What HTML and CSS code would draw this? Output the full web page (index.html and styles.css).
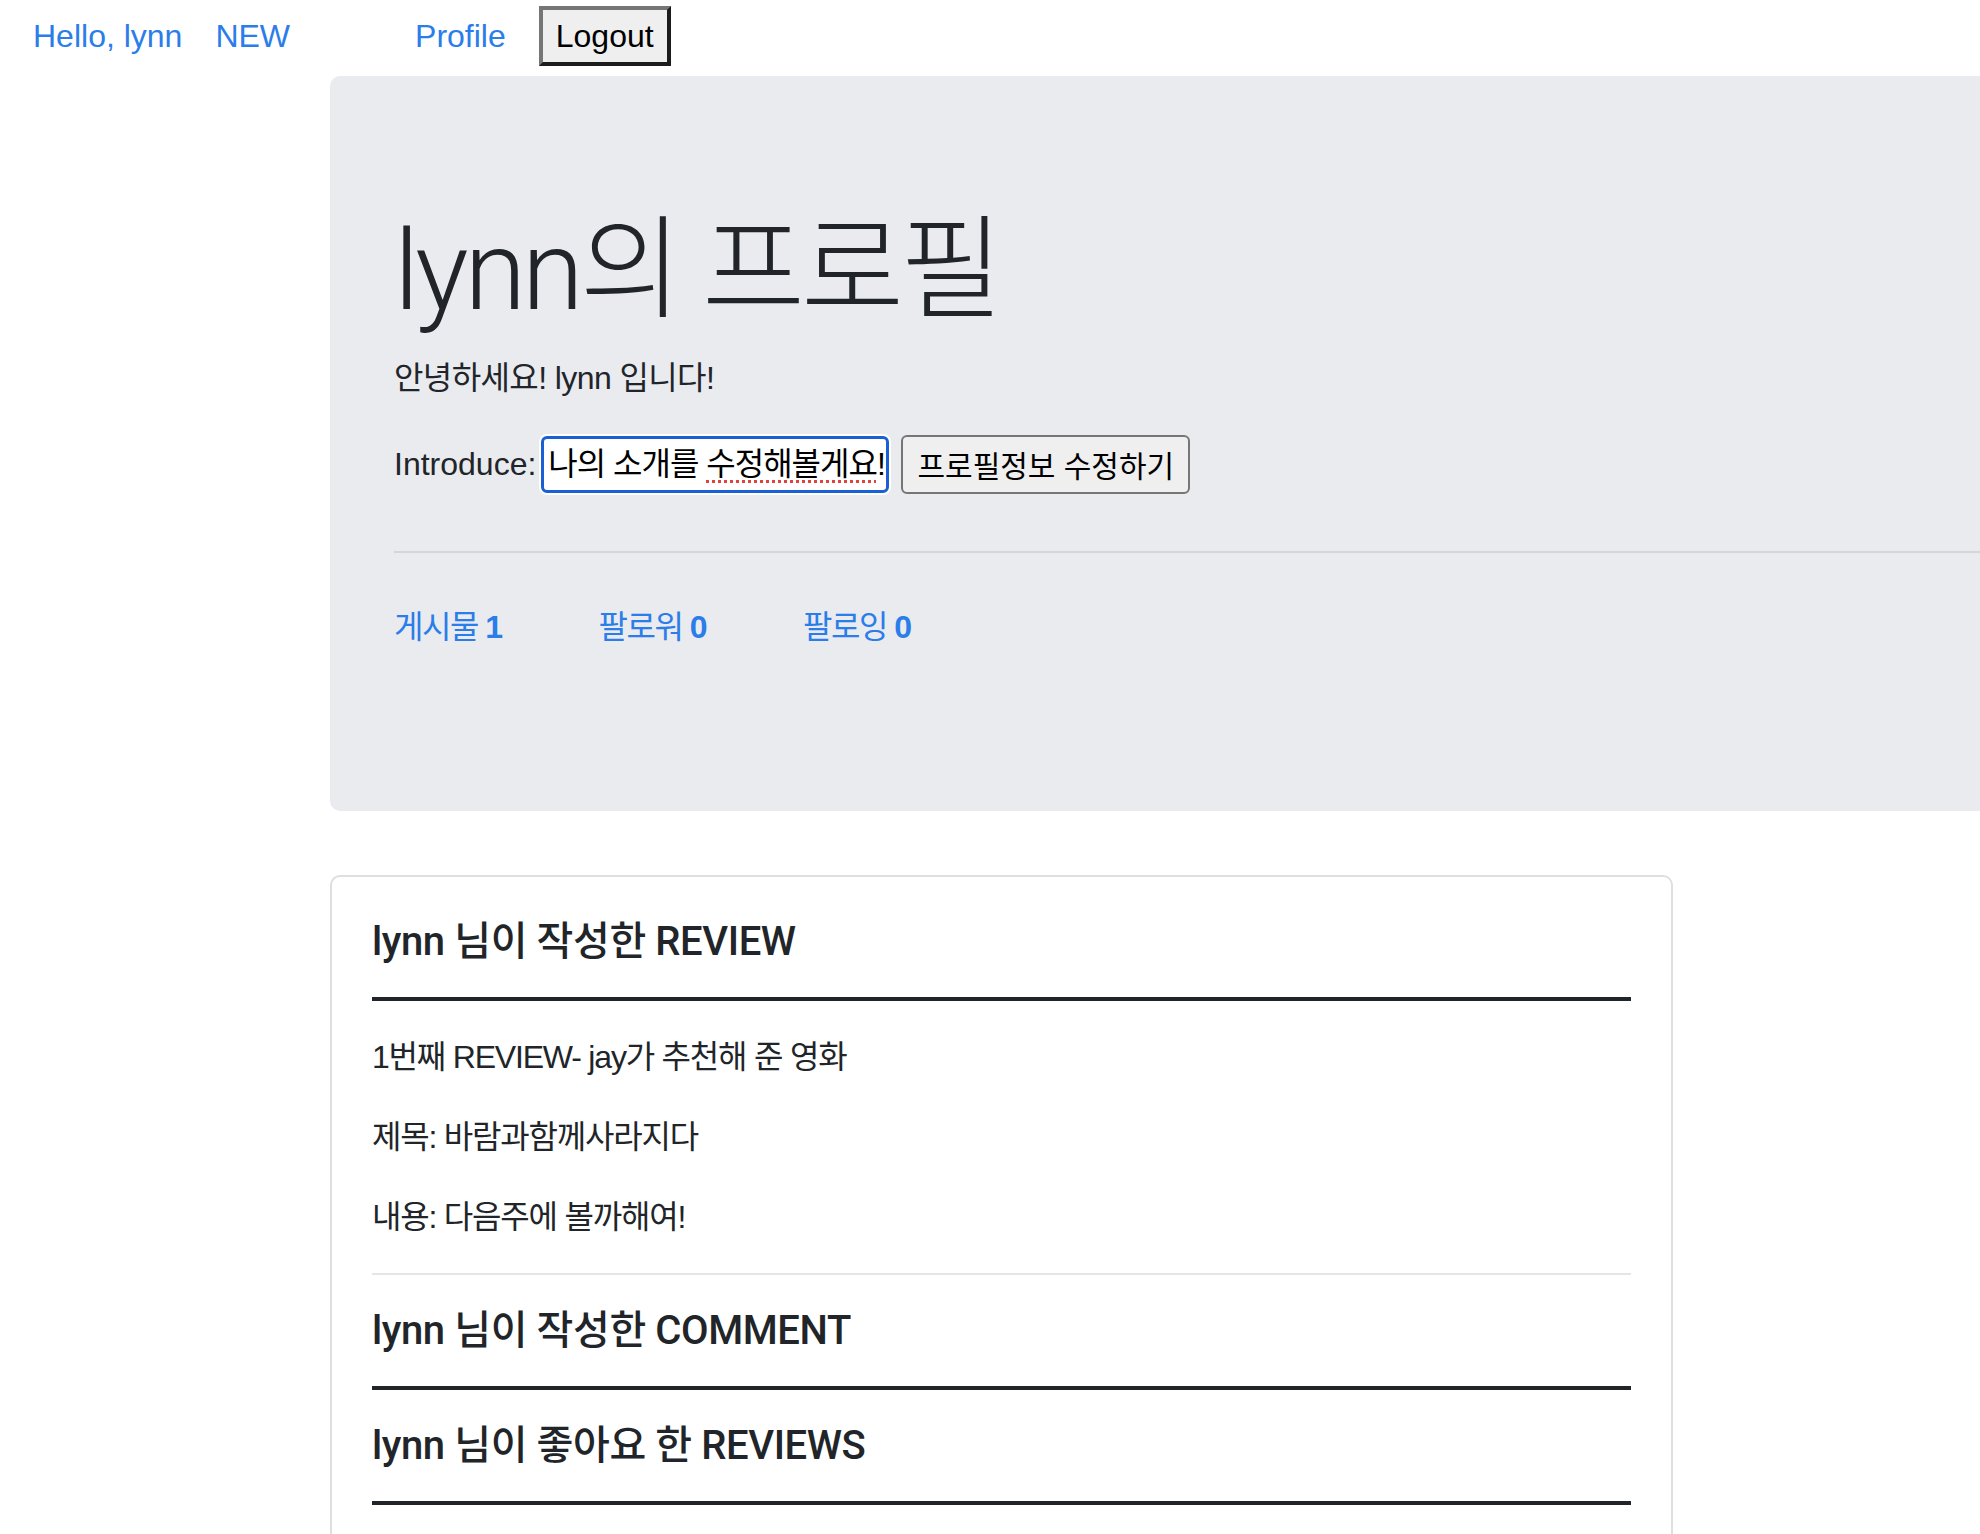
FILE: index.html
```html
<!DOCTYPE html>
<html lang="ko">
<head>
<meta charset="utf-8">
<title>lynn의 프로필</title>
<link rel="stylesheet" href="styles.css">
</head>
<body>
<nav class="topnav">
  <a class="nav-link nav-hello" href="#">Hello, lynn</a>
  <a class="nav-link nav-new" href="#">NEW</a>
  <a class="nav-link nav-profile" href="#">Profile</a>
  <button class="logout" type="button">Logout</button>
</nav>
<main class="content">
  <section class="jumbotron">
    <h1 class="display">lynn의 프로필</h1>
    <p class="greeting">안녕하세요! lynn 입니다!</p>
    <form class="intro-form">
      <label class="intro-label">Introduce:</label>
      <div class="intro-input" role="textbox">나의 소개를 <span class="misspelled">수정해볼게요</span>!<span class="caret"></span></div>
      <button class="intro-submit" type="button">프로필정보 수정하기</button>
    </form>
    <hr class="divider">
    <p class="stats">
      <a href="#">게시물 <strong>1</strong></a>
      <a href="#">팔로워 <strong>0</strong></a>
      <a href="#">팔로잉 <strong>0</strong></a>
    </p>
  </section>
  <section class="card">
    <h5 class="section-title">lynn 님이 작성한 REVIEW</h5>
    <div class="review">
      <p>1번째 REVIEW- jay가 추천해 준 영화</p>
      <p>제목: 바람과함께사라지다</p>
      <p>내용: 다음주에 볼까해여!</p>
    </div>
    <hr class="rule">
    <h5 class="section-title">lynn 님이 작성한 COMMENT</h5>
    <h5 class="section-title">lynn 님이 좋아요 한 REVIEWS</h5>
  </section>
</main>
</body>
</html>
```
FILE: styles.css
```css
* { box-sizing: border-box; }

body {
  margin: 0;
  font-family: "Liberation Sans", "Noto Sans CJK KR", sans-serif;
  font-size: 32px;
  line-height: 48px;
  color: #212529;
  background: #fff;
}

a { color: #2b7de9; text-decoration: none; }

.topnav {
  display: flex;
  align-items: center;
  height: 76px;
  padding: 6px 0 10px 33px;
}

.nav-link { line-height: 48px; }
.nav-hello { margin-right: 33px; }
.nav-new { margin-right: 125px; }
.nav-profile { margin-right: 33px; }

.logout {
  height: 60px;
  padding: 0 13px;
  font-family: "Liberation Sans", "Noto Sans CJK KR", sans-serif;
  font-size: 32px;
  line-height: 52px;
  color: #000;
  background: #efefef;
  border: 4px solid;
  border-color: #767676 #1c1c1c #1c1c1c #767676;
  border-radius: 0;
}

.jumbotron {
  margin-left: 330px;
  background: #e9ebef;
  border-radius: 10px 0 0 10px;
  padding: 128px 0 128px 64px;
}

.display {
  font-family: Roboto, "Noto Sans CJK KR", sans-serif;
  font-weight: 300;
  font-size: 112px;
  line-height: 134px;
  letter-spacing: -4px;
  margin: 0 0 16px;
}

.greeting {
  margin: 0 0 32px;
  letter-spacing: -0.6px;
}

.intro-form {
  display: flex;
  align-items: center;
  height: 60px;
}

.intro-label { margin-right: 5px; }

.intro-input {
  width: 348px;
  height: 57px;
  margin-right: 12px;
  padding: 0 2px 0 4px;
  background: #fff;
  color: #000;
  border: 3px solid #1a5fd3;
  border-radius: 6px;
  box-shadow: 0 0 0 2px #fff;
  line-height: 51px;
  letter-spacing: -1px;
  white-space: nowrap;
  overflow: hidden;
}

.misspelled {
  text-decoration: underline dotted #e0443e;
  text-decoration-thickness: 3px;
  text-underline-offset: 5px;
}

.caret {
  display: inline-block;
  width: 2px;
  height: 36px;
  margin-left: 2px;
  background: #000;
  vertical-align: -6px;
}

.intro-submit {
  width: 289px;
  height: 59px;
  padding: 0;
  font-family: "Liberation Sans", "Noto Sans CJK KR", sans-serif;
  font-size: 30px;
  color: #000;
  background: #efefef;
  border: 2px solid #767676;
  border-radius: 6px;
}

.divider {
  margin: 57px 0 50px;
  border: 0;
  border-top: 2px solid #d3d5d9;
}

.stats {
  display: flex;
  gap: 97px;
  margin: 0 0 32px;
  letter-spacing: -1.5px;
}

.card {
  width: 1343px;
  margin: 64px 0 0 330px;
  padding: 41px 40px 80px;
  border: 2px solid #dfdfdf;
  border-radius: 10px;
}

.section-title {
  font-family: Roboto, "Noto Sans CJK KR", sans-serif;
  font-weight: 500;
  font-size: 40px;
  line-height: 48px;
  letter-spacing: -0.4px;
  margin: 0 0 32px;
  padding-bottom: 31px;
  border-bottom: 4px solid #212529;
}

.review p {
  margin: 0 0 32px;
  letter-spacing: -1.2px;
}

.rule {
  margin: 0 0 32px;
  border: 0;
  border-top: 2px solid #e5e5e5;
}
```
